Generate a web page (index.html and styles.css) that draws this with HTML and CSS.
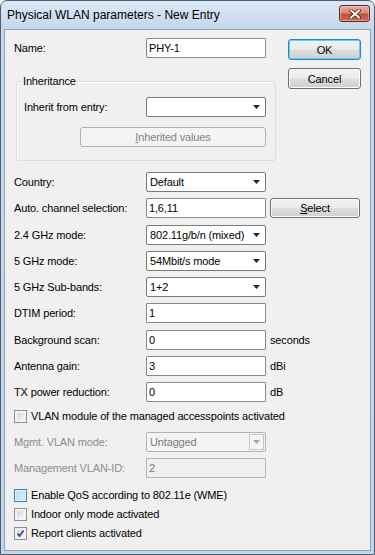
FILE: index.html
```html
<!DOCTYPE html>
<html lang="en">
<head>
    <meta charset="UTF-8">
    <meta name="viewport" content="width=device-width, initial-scale=1.0">
    <title>Physical WLAN parameters - New Entry</title>
    <link rel="stylesheet" href="styles.css">
</head>
<body>
    <div class="window">
        <!-- Title bar -->
        <div class="titlebar">
            <span class="title">Physical WLAN parameters - New Entry</span>
            <button class="close" aria-label="Close">
                <svg width="12" height="10" viewBox="0 0 12 10">
                    <path d="M2 1.5 L10 8.5 M10 1.5 L2 8.5" stroke="#4a1d17" stroke-width="3.6" stroke-linecap="square"/>
                    <path d="M2 1.5 L10 8.5 M10 1.5 L2 8.5" stroke="#ffffff" stroke-width="2" stroke-linecap="square"/>
                </svg>
            </button>
        </div>

        <div class="client">
            <div class="top">
                <div class="topLeft">
                    <div class="row">
                        <span class="lbl">Name:</span>
                        <input class="field" type="text" value="PHY-1">
                    </div>

                    <!-- Inheritance group -->
                    <fieldset class="group">
                        <legend>Inheritance</legend>
                        <div class="row">
                            <span class="lbl lblInner">Inherit from entry:</span>
                            <div class="combo"><span class="comboText"></span><svg class="arrow" width="7" height="4" viewBox="0 0 7 4"><polygon points="0,0 7,0 3.5,4" fill="#17275a"/></svg></div>
                        </div>
                        <div class="btnRow">
                            <button class="btn btnWide" disabled><u>I</u>nherited values</button>
                        </div>
                    </fieldset>
                </div>

                <div class="topRight">
                    <button class="btn btnDefault">OK</button>
                    <button class="btn">Cancel</button>
                </div>
            </div>

            <!-- Main parameters -->
            <div class="rows">
                <div class="row">
                    <span class="lbl">Country:</span>
                    <div class="combo"><span class="comboText">Default</span><svg class="arrow" width="7" height="4" viewBox="0 0 7 4"><polygon points="0,0 7,0 3.5,4" fill="#17275a"/></svg></div>
                </div>
                <div class="row">
                    <span class="lbl">Auto. channel selection:</span>
                    <input class="field" type="text" value="1,6,11">
                    <button class="btn btnSelect"><u>S</u>elect</button>
                </div>
                <div class="row">
                    <span class="lbl">2.4 GHz mode:</span>
                    <div class="combo"><span class="comboText">802.11g/b/n (mixed)</span><svg class="arrow" width="7" height="4" viewBox="0 0 7 4"><polygon points="0,0 7,0 3.5,4" fill="#17275a"/></svg></div>
                </div>
                <div class="row">
                    <span class="lbl">5 GHz mode:</span>
                    <div class="combo"><span class="comboText">54Mbit/s mode</span><svg class="arrow" width="7" height="4" viewBox="0 0 7 4"><polygon points="0,0 7,0 3.5,4" fill="#17275a"/></svg></div>
                </div>
                <div class="row">
                    <span class="lbl">5 GHz Sub-bands:</span>
                    <div class="combo"><span class="comboText">1+2</span><svg class="arrow" width="7" height="4" viewBox="0 0 7 4"><polygon points="0,0 7,0 3.5,4" fill="#17275a"/></svg></div>
                </div>
                <div class="row">
                    <span class="lbl">DTIM period:</span>
                    <input class="field" type="text" value="1">
                </div>
                <div class="row">
                    <span class="lbl">Background scan:</span>
                    <input class="field" type="text" value="0">
                    <span class="unit">seconds</span>
                </div>
                <div class="row">
                    <span class="lbl">Antenna gain:</span>
                    <input class="field" type="text" value="3">
                    <span class="unit">dBi</span>
                </div>
                <div class="row">
                    <span class="lbl">TX power reduction:</span>
                    <input class="field" type="text" value="0">
                    <span class="unit">dB</span>
                </div>
            </div>

            <!-- VLAN -->
            <div class="check checkVlan">
                <span class="cb"></span>
                <span>VLAN module of the managed accesspoints activated</span>
            </div>
            <div class="vlanRows">
                <div class="row disabled">
                    <span class="lbl">Mgmt. VLAN mode:</span>
                    <div class="combo comboOff"><span class="comboText">Untagged</span><span class="dropBox"><svg width="7" height="4" viewBox="0 0 7 4"><polygon points="0,0 7,0 3.5,4" fill="#a3a3a3"/></svg></span></div>
                </div>
                <div class="row disabled">
                    <span class="lbl">Management VLAN-ID:</span>
                    <input class="field fieldOff" type="text" value="2" disabled>
                </div>
            </div>

            <!-- Options -->
            <div class="checks">
                <div class="check">
                    <span class="cb cbHot"></span>
                    <span>Enable QoS according to 802.11e (WME)</span>
                </div>
                <div class="check">
                    <span class="cb"></span>
                    <span>Indoor only mode activated</span>
                </div>
                <div class="check">
                    <span class="cb">
                        <svg width="9" height="9" viewBox="0 0 9 9"><path d="M1.5 4.5 L3.5 7 L7.5 1.5" stroke="#2c4a8e" stroke-width="1.7" fill="none"/></svg>
                    </span>
                    <span>Report clients activated</span>
                </div>
            </div>
        </div>
    </div>
</body>
</html>
```

FILE: styles.css
```css
body {
    margin: 0;
    font-family: "Liberation Sans", Arial, sans-serif;
    font-size: 11px;
    color: #000;
    background: #fff;
}

.window {
    width: 375px;
    height: 555px;
    box-sizing: border-box;
    border: 1px solid #4b5d73;
    border-radius: 7px 7px 0 0;
    padding: 0 3px 3px 3px;
    display: flex;
    flex-direction: column;
    background: linear-gradient(#dce8f5, #c4d7ec 28px, #c2d5ea);
}

.titlebar {
    height: 28px;
    display: flex;
    align-items: flex-start;
    justify-content: space-between;
    padding: 0 1px 0 3px;
}

.title {
    font-size: 12px;
    line-height: 28px;
    color: #000;
}

.close {
    margin-top: 4px;
    width: 31px;
    height: 17px;
    padding: 0;
    border: 1px solid #5e2a22;
    border-radius: 3px;
    display: flex;
    align-items: center;
    justify-content: center;
    background: linear-gradient(#e8ab9e, #d98a79 45%, #c4513e 55%, #d06a4f);
    box-shadow: inset 0 0 0 1px rgba(255, 220, 210, 0.45);
}

.client {
    flex: 1;
    border: 1px solid #8ea3b9;
    background-color: #f0f0f0;
    padding: 8px 10px 0 9px;
    letter-spacing: -0.15px;
}

.top {
    display: flex;
    gap: 12px;
}

.topLeft {
    width: 262px;
}

.topRight {
    display: flex;
    flex-direction: column;
    gap: 8px;
    padding-top: 1px;
}

.row {
    display: flex;
    align-items: center;
    height: 20px;
}

.lbl {
    width: 132px;
    flex-shrink: 0;
}

.lblInner {
    width: 122px;
}

.field {
    width: 120px;
    height: 20px;
    box-sizing: border-box;
    margin: 0;
    padding: 0 2px;
    border: 1px solid #828790;
    border-radius: 1px;
    background: #fff;
    font-family: inherit;
    font-size: 11px;
    letter-spacing: inherit;
    color: #000;
    outline: none;
}

.fieldOff {
    background: #f0f0f0;
    border-color: #b4b8bd;
    color: #7a7a7a;
}

.combo {
    width: 120px;
    height: 20px;
    box-sizing: border-box;
    border: 1px solid #7a7a7a;
    border-radius: 2px;
    background: #fff;
    display: flex;
    align-items: center;
    padding-left: 3px;
}

.comboText {
    flex: 1;
    white-space: nowrap;
    overflow: hidden;
}

.arrow {
    margin: 0 5px 0 3px;
    flex-shrink: 0;
}

.comboOff {
    background: #f4f4f4;
    border-color: #adb2b5;
    color: #7a7a7a;
    padding-right: 1px;
}

.dropBox {
    width: 15px;
    height: 16px;
    box-sizing: border-box;
    border: 1px solid #c3c6c9;
    background: #f4f4f4;
    display: flex;
    align-items: center;
    justify-content: center;
}

.btn {
    height: 21px;
    width: 73px;
    box-sizing: border-box;
    padding: 0;
    border: 1px solid #707070;
    border-radius: 3px;
    font-family: inherit;
    font-size: 11px;
    letter-spacing: inherit;
    color: #000;
    background: linear-gradient(#f2f2f2, #ebebeb 48%, #dddddd 52%, #cfcfcf);
    box-shadow: inset 0 0 0 1px #fbfbfb;
}

.btnDefault {
    border-color: #3c7fb1;
    box-shadow: inset 0 0 0 1px #48d8fb;
}

.btnSelect {
    width: 91px;
    height: 20px;
    margin-left: 4px;
}

.btnRow {
    display: flex;
    justify-content: flex-end;
    margin-top: 10px;
}

.btnWide {
    width: 186px;
    height: 20px;
}

.btn:disabled {
    border-color: #adb2b5;
    background: #f4f4f4;
    box-shadow: none;
    color: #838383;
}

.group {
    margin: 17px 0 0 2px;
    padding: 10px 9px 13px 7px;
    border: 1px solid #d5dfe5;
    border-radius: 3px;
    box-shadow: inset 1px 1px 0 #fff;
}

.group legend {
    padding: 0 1px;
    margin-left: -2px;
    line-height: 12px;
}

.rows {
    margin-top: 11px;
    display: flex;
    flex-direction: column;
    gap: 6.25px;
}

.unit {
    margin-left: 4px;
}

.check {
    display: flex;
    align-items: center;
    gap: 4px;
    height: 13px;
    line-height: 13px;
}

.checkVlan {
    margin-top: 8px;
}

.cb {
    width: 13px;
    height: 13px;
    box-sizing: border-box;
    border: 1px solid #8e8f8f;
    background: linear-gradient(135deg, #c9cdd3, #eef0f2 70%, #f8f8f8);
    box-shadow: inset 0 0 0 2px #f4f4f4;
    display: flex;
    align-items: center;
    justify-content: center;
    flex-shrink: 0;
}

.cbHot {
    border-color: #3c7fb1;
    background: linear-gradient(135deg, #b1dcf5, #e0f3fd);
    box-shadow: inset 0 0 0 1px #def9fa, inset 0 0 0 2px #c2e4f6;
}

.vlanRows {
    margin-top: 9px;
    display: flex;
    flex-direction: column;
    gap: 6px;
}

.disabled .lbl {
    color: #8d8d8d;
}

.checks {
    margin-top: 11px;
    display: flex;
    flex-direction: column;
    gap: 6px;
}
```
